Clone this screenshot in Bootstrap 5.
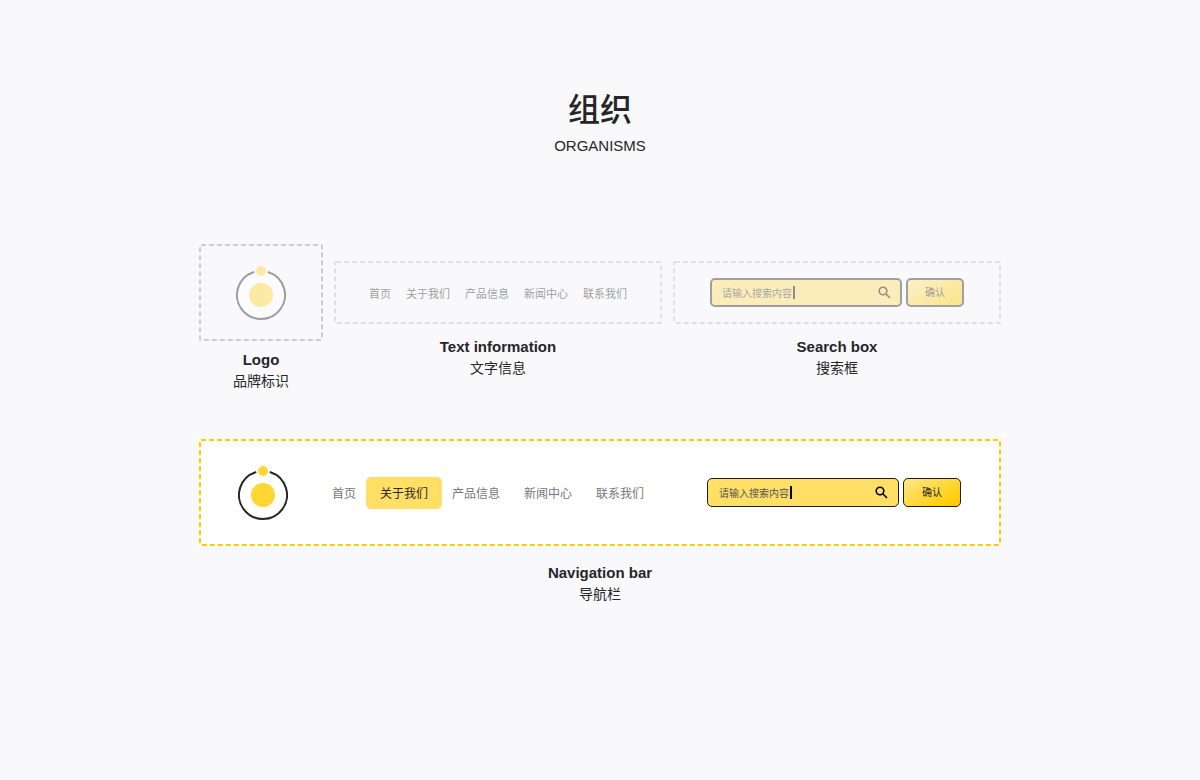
<!DOCTYPE html>
<html lang="zh-CN">
<head>
<meta charset="utf-8">
<meta name="viewport" content="width=device-width, initial-scale=1">
<title>组织 Organisms</title>
<link href="https://cdn.jsdelivr.net/npm/bootstrap@5.3.0/dist/css/bootstrap.min.css" rel="stylesheet">
<style>
  body { background: #f9f9fc; color: #262628; font-family: "Liberation Sans", "Noto Sans CJK SC", sans-serif; }
  .board { max-width: 802px; padding-top: 86px; }
  .page-head { margin-bottom: 86px; }
  .page-head h1 { font-size: 32px; line-height: 48px; font-weight: 500; }
  .page-head p { font-size: 15px; line-height: 24px; }
  .parts { gap: 11px; margin-bottom: 47px; }
  .logo-part { width: 124px; }
  .side-part { padding-top: 17px; min-width: 0; }
  .frame { position: relative; color: #ccccce; }
  .frame-line { position: absolute; inset: 0; width: 100%; height: 100%; pointer-events: none; }
  .frame-line rect { x: 1px; y: 1px; width: calc(100% - 2px); height: calc(100% - 2px); fill: none; stroke: currentColor; stroke-width: 2; stroke-dasharray: 5 3; }
  .frame-logo { height: 97px; }
  .frame-small { height: 63px; color: #e1e1e3; }
  .frame-bar { min-height: 107px; background: #fff; color: #fc0; padding: 0 40px 0 39px; }
  .faded { opacity: .43; }
  .caption-text { line-height: 21px; font-size: 14px; padding-top: 12px; }
  .caption-text h2 { font-size: 15px; line-height: 22px; font-weight: 700; }
  .logo-part .caption-text { padding-top: 8px; }
  .caption-text.caption-bar { padding-top: 16px; }
  .plain-links { gap: 15px; font-size: 11px; padding-top: 3px; }
  .plain-links a { color: #262628; text-decoration: none; }
  .bar-links { margin-left: 32px; font-size: 12px; }
  .bar-links .nav-link { color: #76767c; padding: 2px 14px 0; margin: 0 -2px; line-height: 30px; border-radius: 5px; }
  .bar-links .nav-link.active { background: #ffdf66; color: #262628; }
  .search-row { gap: 4px; }
  .search-field { position: relative; width: 192px; }
  .search-field .form-control { height: 29px; padding: 0 32px 0 11px; font-size: 10px; border: 1px solid #1c1c1c; border-radius: 5px; background: #ffdf66; color: #555; box-shadow: none; }
  .search-row .btn { width: 58px; height: 29px; padding: 0; font-size: 10px; border: 1px solid #1c1c1c; border-radius: 5px; color: #262628; background: linear-gradient(150deg, #ffe88f, #fc0 85%) border-box; }
  .text-caret { position: absolute; left: 83px; top: 8px; width: 2px; height: 13px; background: #000; }
  .search-icon { position: absolute; right: 11px; top: 8px; }
  .soft .form-control, .soft .btn { border: 2px solid #2c2c2c; }
  .soft .form-control { padding-left: 10px; color: #333; }
</style>
</head>
<body>
<main class="board container-fluid px-0">
  <header class="page-head text-center">
    <h1 class="mb-0">组织</h1>
    <p class="mb-0">ORGANISMS</p>
  </header>

  <div class="parts d-flex align-items-start">
    <section class="logo-part flex-shrink-0 text-center">
      <div class="frame frame-logo d-flex align-items-center justify-content-center">
        <svg class="frame-line" aria-hidden="true"><rect rx="1"/></svg>
        <svg class="faded" width="50" height="55" viewBox="0 0 50 55" role="img" aria-label="Logo">
          <path d="M32.5 7.2A24 24 0 1 1 17.5 7.2" fill="#fff" stroke="#262628" stroke-width="2" stroke-linecap="round"/>
          <circle cx="25" cy="30" r="12" fill="#ffd633"/>
          <circle cx="25" cy="6" r="5" fill="#ffd633"/>
        </svg>
      </div>
      <div class="caption-text"><h2 class="mb-0">Logo</h2><p class="mb-0">品牌标识</p></div>
    </section>

    <section class="side-part flex-fill w-50 text-center">
      <div class="frame frame-small d-flex align-items-center justify-content-center">
        <svg class="frame-line" aria-hidden="true"><rect rx="1"/></svg>
        <nav class="plain-links faded d-flex" aria-label="文字信息">
          <a href="#">首页</a><a href="#">关于我们</a><a href="#">产品信息</a><a href="#">新闻中心</a><a href="#">联系我们</a>
        </nav>
      </div>
      <div class="caption-text"><h2 class="mb-0">Text information</h2><p class="mb-0">文字信息</p></div>
    </section>

    <section class="side-part flex-fill w-50 text-center">
      <div class="frame frame-small d-flex align-items-center justify-content-center">
        <svg class="frame-line" aria-hidden="true"><rect rx="1"/></svg>
        <form class="search-row soft faded d-flex">
          <div class="search-field">
            <input class="form-control" type="text" value="请输入搜索内容" aria-label="搜索框">
            <span class="text-caret"></span>
            <svg class="search-icon" width="13" height="13" viewBox="0 0 13 13" fill="none" stroke="#000" stroke-width="1.6" aria-hidden="true"><circle cx="5" cy="5" r="3.8"/><path d="M7.8 7.8L12 12"/></svg>
          </div>
          <button class="btn" type="button">确认</button>
        </form>
      </div>
      <div class="caption-text"><h2 class="mb-0">Search box</h2><p class="mb-0">搜索框</p></div>
    </section>
  </div>

  <section class="text-center">
    <div class="frame frame-bar d-flex align-items-center">
      <svg class="frame-line" aria-hidden="true"><rect rx="1"/></svg>
      <svg class="flex-shrink-0" width="50" height="55" viewBox="0 0 50 55" role="img" aria-label="Logo">
        <path d="M32.5 7.2A24 24 0 1 1 17.5 7.2" fill="none" stroke="#262628" stroke-width="2" stroke-linecap="round"/>
        <circle cx="25" cy="30" r="12" fill="#ffd633"/>
        <circle cx="25" cy="6" r="5" fill="#ffd633"/>
      </svg>
      <nav class="bar-links nav" aria-label="导航栏">
        <a class="nav-link" href="#">首页</a>
        <a class="nav-link active" aria-current="page" href="#">关于我们</a>
        <a class="nav-link" href="#">产品信息</a>
        <a class="nav-link" href="#">新闻中心</a>
        <a class="nav-link" href="#">联系我们</a>
      </nav>
      <form class="search-row d-flex ms-auto">
        <div class="search-field">
          <input class="form-control" type="text" value="请输入搜索内容" aria-label="搜索">
          <span class="text-caret"></span>
          <svg class="search-icon" width="13" height="13" viewBox="0 0 13 13" fill="none" stroke="#000" stroke-width="1.6" aria-hidden="true"><circle cx="5" cy="5" r="3.8"/><path d="M7.8 7.8L12 12"/></svg>
        </div>
        <button class="btn" type="button">确认</button>
      </form>
    </div>
    <div class="caption-text caption-bar"><h2 class="mb-0">Navigation bar</h2><p class="mb-0">导航栏</p></div>
  </section>
</main>
<script src="https://cdn.jsdelivr.net/npm/bootstrap@5.3.0/dist/js/bootstrap.bundle.min.js"></script>
</body>
</html>
